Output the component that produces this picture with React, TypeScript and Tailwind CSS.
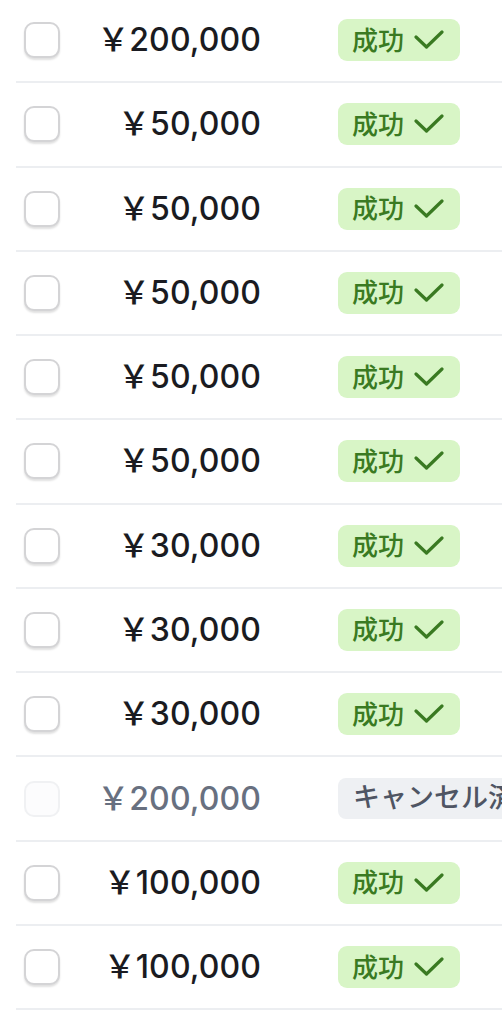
type Row = { amount: string; status: 'success' | 'canceled' };

const rows: Row[] = [
  { amount: '￥200,000', status: 'success' },
  { amount: '￥50,000', status: 'success' },
  { amount: '￥50,000', status: 'success' },
  { amount: '￥50,000', status: 'success' },
  { amount: '￥50,000', status: 'success' },
  { amount: '￥50,000', status: 'success' },
  { amount: '￥30,000', status: 'success' },
  { amount: '￥30,000', status: 'success' },
  { amount: '￥30,000', status: 'success' },
  { amount: '￥200,000', status: 'canceled' },
  { amount: '￥100,000', status: 'success' },
  { amount: '￥100,000', status: 'success' },
];

function CheckMark() {
  return (
    <svg width="30" height="20" viewBox="0 0 30 20" fill="none" className="shrink-0">
      <path
        d="M2 7 L12.5 17 L28 2"
        stroke="currentColor"
        strokeWidth="3.2"
        strokeLinecap="round"
        strokeLinejoin="round"
      />
    </svg>
  );
}

export default function App() {
  return (
    <div
      className="w-[502px] h-[1017px] overflow-hidden bg-white"
      style={{ fontFamily: 'Inter, "Noto Sans CJK JP", sans-serif' }}
    >
      <div className="-mt-[1px]">
        {rows.map((row, i) => {
          const canceled = row.status === 'canceled';
          return (
            <div key={i} className="ml-4 h-[84.27px] border-b-2 border-[#eceef1] flex items-center">
              <div
                className={`ml-2 w-9 h-9 shrink-0 rounded-[10px] border-2 ${
                  canceled
                    ? 'border-[#f0f1f3] bg-[#fcfcfd]'
                    : 'border-[#d4d4d6] bg-white shadow-[0_2px_2px_rgba(0,0,0,0.12)]'
                }`}
              />
              <div
                className={`w-[201px] shrink-0 text-right text-[32px] font-medium tracking-[0.1px] leading-none whitespace-nowrap ${
                  canceled ? 'text-[#687080]' : 'text-[#1a1b21]'
                }`}
              >
                {row.amount}
              </div>
              {canceled ? (
                <div className="ml-[77px] shrink-0 h-[41px] pl-[15px] pr-6 rounded-lg bg-[#eef0f3] flex items-center whitespace-nowrap text-[27px] font-medium text-[#4f5563]">
                  キャンセル済み
                </div>
              ) : (
                <div className="ml-[77px] shrink-0 h-[42px] w-[122px] rounded-[9px] bg-[#d8f5c6] flex items-center gap-[10px] pl-[14px] text-[26px] font-medium text-[#3a7a22]">
                  <span>成功</span>
                  <CheckMark />
                </div>
              )}
            </div>
          );
        })}
      </div>
    </div>
  );
}
